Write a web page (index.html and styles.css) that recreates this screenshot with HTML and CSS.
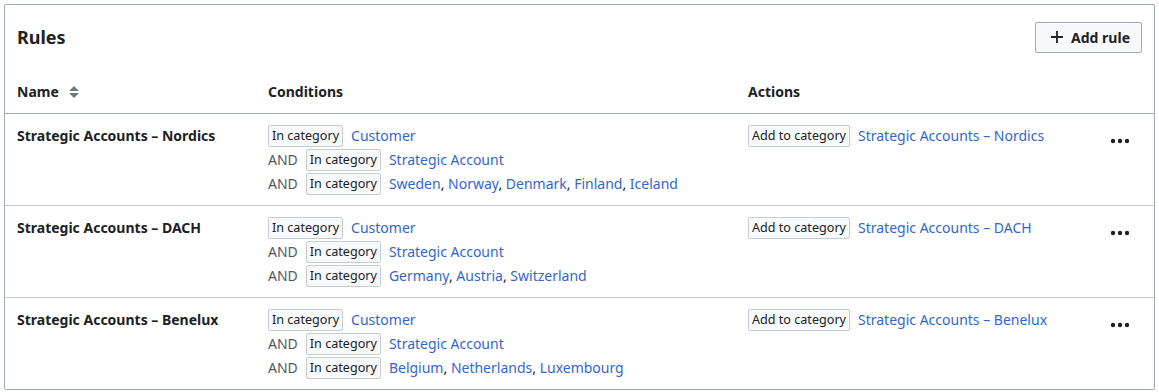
FILE: index.html
```html
<!DOCTYPE html>
<html lang="en">
<head>
<meta charset="utf-8">
<title>Rules</title>
<link rel="stylesheet" href="styles.css">
</head>
<body>
<div class="panel">
  <div class="panel-header">
    <h2 class="panel-title">Rules</h2>
    <button class="btn" type="button">
      <svg class="btn-icon" width="14" height="14" viewBox="0 0 14 14" aria-hidden="true"><path d="M7 1v12M1 7h12" stroke="#202122" stroke-width="1.8" fill="none"/></svg>
      <span>Add rule</span>
    </button>
  </div>
  <table class="rules">
    <colgroup>
      <col class="c-name"><col class="c-cond"><col class="c-act"><col class="c-menu">
    </colgroup>
    <thead>
      <tr>
        <th><span class="th-sort">Name
          <svg class="sort" width="10" height="14" viewBox="0 0 10 14" aria-hidden="true"><path d="M5 1L10 6H0z M5 13L0 8h10z" fill="#72777d"/></svg></span></th>
        <th>Conditions</th>
        <th>Actions</th>
        <th></th>
      </tr>
    </thead>
    <tbody>
      <tr>
        <td class="name">Strategic Accounts – Nordics</td>
        <td>
          <div class="line"><span class="tag">In category</span><a href="#">Customer</a></div>
          <div class="line"><span class="and">AND</span><span class="tag">In category</span><a href="#">Strategic Account</a></div>
          <div class="line"><span class="and">AND</span><span class="tag">In category</span><span class="list"><a href="#">Sweden</a>, <a href="#">Norway</a>, <a href="#">Denmark</a>, <a href="#">Finland</a>, <a href="#">Iceland</a></span></div>
        </td>
        <td><div class="line"><span class="tag">Add to category</span><a href="#">Strategic Accounts – Nordics</a></div></td>
        <td class="menu"><button class="more" type="button" aria-label="More"><svg width="20" height="6" viewBox="0 0 20 6"><circle cx="3" cy="3" r="2.2"/><circle cx="10" cy="3" r="2.2"/><circle cx="17" cy="3" r="2.2"/></svg></button></td>
      </tr>
      <tr>
        <td class="name">Strategic Accounts – DACH</td>
        <td>
          <div class="line"><span class="tag">In category</span><a href="#">Customer</a></div>
          <div class="line"><span class="and">AND</span><span class="tag">In category</span><a href="#">Strategic Account</a></div>
          <div class="line"><span class="and">AND</span><span class="tag">In category</span><span class="list"><a href="#">Germany</a>, <a href="#">Austria</a>, <a href="#">Switzerland</a></span></div>
        </td>
        <td><div class="line"><span class="tag">Add to category</span><a href="#">Strategic Accounts – DACH</a></div></td>
        <td class="menu"><button class="more" type="button" aria-label="More"><svg width="20" height="6" viewBox="0 0 20 6"><circle cx="3" cy="3" r="2.2"/><circle cx="10" cy="3" r="2.2"/><circle cx="17" cy="3" r="2.2"/></svg></button></td>
      </tr>
      <tr>
        <td class="name">Strategic Accounts – Benelux</td>
        <td>
          <div class="line"><span class="tag">In category</span><a href="#">Customer</a></div>
          <div class="line"><span class="and">AND</span><span class="tag">In category</span><a href="#">Strategic Account</a></div>
          <div class="line"><span class="and">AND</span><span class="tag">In category</span><span class="list"><a href="#">Belgium</a>, <a href="#">Netherlands</a>, <a href="#">Luxembourg</a></span></div>
        </td>
        <td><div class="line"><span class="tag">Add to category</span><a href="#">Strategic Accounts – Benelux</a></div></td>
        <td class="menu"><button class="more" type="button" aria-label="More"><svg width="20" height="6" viewBox="0 0 20 6"><circle cx="3" cy="3" r="2.2"/><circle cx="10" cy="3" r="2.2"/><circle cx="17" cy="3" r="2.2"/></svg></button></td>
      </tr>
    </tbody>
  </table>
</div>
</body>
</html>
```
FILE: styles.css
```css
* { box-sizing: border-box; }
html, body { background: #fff; }
body {
  margin: 0;
  padding: 4px;
  font-family: "Noto Sans", "DejaVu Sans", sans-serif;
  font-size: 14px;
  color: #202122;
}
.panel {
  width: 1151px;
  border: 1px solid #a2a9b1;
  border-radius: 2px;
  background: #fff;
}
.panel-header {
  display: flex;
  align-items: center;
  justify-content: space-between;
  padding: 16px 12px 16px 12px;
}
.panel-title {
  margin: 0;
  font-size: 18px;
  font-weight: 700;
  line-height: 32px;
}
.btn {
  display: inline-flex;
  align-items: center;
  gap: 7px;
  height: 31px;
  padding: 0 11px 0 14px;
  border: 1px solid #a2a9b1;
  border-radius: 2px;
  background: #f8f9fa;
  font-family: inherit;
  font-size: 14px;
  font-weight: 700;
  color: #202122;
}
.btn-icon { display: block; }
.rules {
  width: 100%;
  border-collapse: collapse;
  table-layout: fixed;
}
.c-name { width: 251px; }
.c-cond { width: 480px; }
.c-act { width: auto; }
.c-menu { width: 64px; }
.rules th {
  text-align: left;
  font-weight: 700;
  line-height: 20px;
  padding: 13px 12px 11px 12px;
  border-bottom: 1px solid #a2a9b1;
}
.th-sort { display: inline-flex; align-items: center; gap: 10px; }
.sort { display: block; }
.rules td {
  vertical-align: top;
  padding: 10px 12px 9px 12px;
  border-bottom: 1px solid #c8ccd1;
  line-height: 24px;
}
.rules tbody tr:last-child td { border-bottom: 0; }
.rules td.name { font-weight: 700; }
.line {
  display: flex;
  align-items: center;
  height: 24px;
  white-space: nowrap;
}
.and { color: #54595d; margin-right: 8px; }
.tag {
  display: inline-block;
  height: 22px;
  line-height: 20px;
  padding: 0 3px;
  border: 1px solid #c8ccd1;
  border-radius: 2px;
  background: #f8f9fa;
  font-size: 12.6px;
  color: #202122;
  margin-right: 8px;
}
a { color: #3366cc; text-decoration: none; }
.list { color: #202122; }
.rules td.menu { padding-left: 14px; padding-top: 11px; }
.more {
  display: flex;
  align-items: center;
  justify-content: center;
  width: 32px;
  height: 32px;
  padding: 0;
  border: 0;
  background: transparent;
  fill: #202122;
}
```
